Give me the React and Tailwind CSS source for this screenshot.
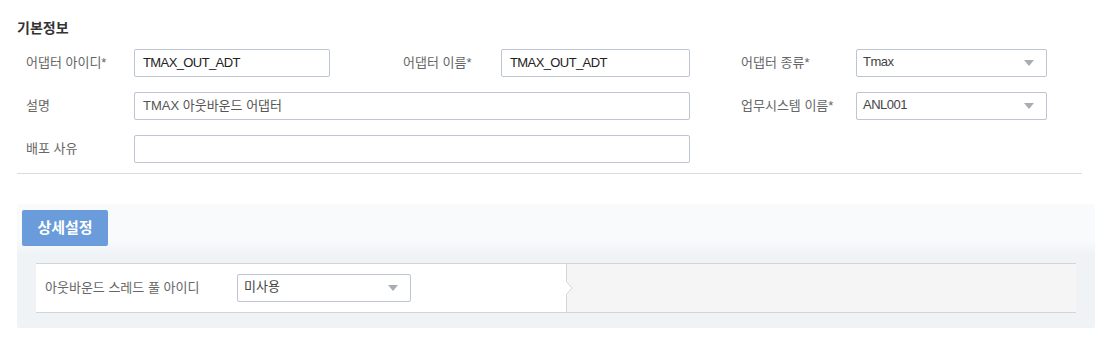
function Field({ value, width, latin }) {
  return (
    <div
      className={`h-[28px] ${width} border border-[#bcc5d1] rounded-[2px] bg-white px-[8px] flex items-center text-[13px] ${
        latin ? 'text-[#222] tracking-[-0.6px]' : 'text-[#555]'
      }`}
    >
      {value}
    </div>
  )
}

function Select({ value, width, latin }) {
  return (
    <div
      className={`h-[28px] ${width} border border-[#bcc5d1] rounded-[2px] bg-white pl-[6px] pr-[12px] flex items-center justify-between text-[13px] text-[#444]`}
    >
      <span className={`-mt-[3px] ${latin ? 'tracking-[-0.5px]' : ''}`}>{value}</span>
      <svg width="10" height="6" viewBox="0 0 10 6" className="-mt-[1px]">
        <path d="M0 0 L10 0 L5 6 Z" fill="#a9adb3" />
      </svg>
    </div>
  )
}

function Label({ children, width }) {
  return <div className={`${width} text-[13px] text-[#666] shrink-0`}>{children}</div>
}

export default function App() {
  return (
    <div className="w-[1106px] h-[343px] bg-white font-['Liberation_Sans','Noto_Sans_CJK_KR',sans-serif] overflow-hidden">
      {/* 기본정보 */}
      <div className="pt-[19px] px-[17px]">
        <h2 className="text-[14px] font-bold text-[#333] leading-[18px]">기본정보</h2>

        <div className="mt-[12px] pl-[9px] flex flex-col gap-[15px]">
          <div className="flex items-center">
            <Label width="w-[108px]">어댑터 아이디*</Label>
            <Field value="TMAX_OUT_ADT" width="w-[196px]" latin />
            <div className="w-[73px]" />
            <Label width="w-[98px]">어댑터 이름*</Label>
            <Field value="TMAX_OUT_ADT" width="w-[189px]" latin />
            <div className="w-[51px]" />
            <Label width="w-[115px]">어댑터 종류*</Label>
            <Select value="Tmax" width="w-[191px]" latin />
          </div>
          <div className="flex items-center">
            <Label width="w-[108px]">설명</Label>
            <Field value="TMAX 아웃바운드 어댑터" width="w-[556px]" />
            <div className="w-[51px]" />
            <Label width="w-[115px]">업무시스템 이름*</Label>
            <Select value="ANL001" width="w-[191px]" latin />
          </div>
          <div className="flex items-center">
            <Label width="w-[108px]">배포 사유</Label>
            <Field value="" width="w-[556px]" />
          </div>
        </div>

        <div className="mt-[10px] w-[1065px] border-t border-[#dcdcdc]" />
      </div>

      {/* 상세설정 */}
      <div className="mt-[30px] ml-[17px] w-[1078px] h-[124px] rounded-[2px] bg-[linear-gradient(to_bottom,#f9fafc_0px,#f9fafc_36px,#eff3f6_52px,#eff3f6_100%)] pt-[6px] pl-[5px]">
        <div className="w-[86px] h-[36px] rounded-[2px] bg-[#6a9bdb] flex items-center justify-center text-white font-bold text-[15px]">
          상세설정
        </div>

        <div className="mt-[17px] ml-[14px] w-[1040px] h-[50px] border-y border-[#d5d5d5] flex">
          <div className="relative w-[531px] bg-white flex items-center pl-[9px] border-r border-[#d5d5d5]">
            <div className="w-[192px] text-[13px] text-[#666]">아웃바운드 스레드 풀 아이디</div>
            <Select value="미사용" width="w-[174px]" />
            <svg
              width="7"
              height="14"
              viewBox="0 0 7 14"
              className="absolute -right-[7px] top-[17px]"
            >
              <path d="M0 0 L6 7 L0 14 Z" fill="#ffffff" />
              <path d="M0 0 L6 7 L0 14" fill="none" stroke="#d5d5d5" strokeWidth="1" />
            </svg>
          </div>
          <div className="flex-1 bg-[#f5f5f5]" />
        </div>
      </div>
    </div>
  )
}
